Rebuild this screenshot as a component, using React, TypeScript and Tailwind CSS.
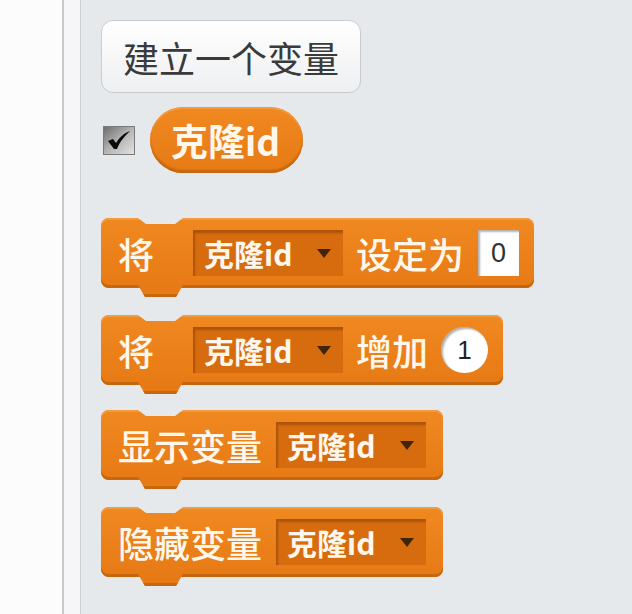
const cjk = { fontFamily: '"Noto Sans CJK SC", "Noto Sans", sans-serif' }
const latin = { fontFamily: '"Liberation Sans", Arial, sans-serif' }

function Block({ width, children }: { width: number; children: React.ReactNode }) {
  return (
    <div
      className="relative flex h-[70px] items-center rounded-[8px] bg-gradient-to-b from-[#f08820] to-[#e77a14] pl-[17px] shadow-[inset_0_-3px_0_#c6660d,inset_0_2px_0_#f39a45]"
      style={{ width }}
    >
      {/* notch on top */}
      <div className="absolute left-[37px] top-0 h-[6px] w-[45px] bg-[#e6e9ec] [clip-path:polygon(0_0,100%_0,calc(100%-8px)_100%,8px_100%)]" />
      {/* tab below */}
      <div className="absolute left-[37px] top-[67px] h-[12px] w-[45px] rounded-b-[4px] bg-[#e77a14] shadow-[inset_0_-3px_0_#c6660d] [clip-path:polygon(0_0,100%_0,calc(100%-7px)_100%,7px_100%)]" />
      {children}
    </div>
  )
}

function Label({ text, className = '' }: { text: string; className?: string }) {
  return (
    <span className={`text-[36px] font-medium leading-none text-[#fff7ec] ${className}`} style={cjk}>
      {text}
    </span>
  )
}

function Dropdown({ className = '' }: { className?: string }) {
  return (
    <div
      className={`flex h-[46px] w-[150px] items-center bg-[#d76c0e] pl-[11px] shadow-[inset_2px_3px_2px_rgba(90,40,0,0.35)] ${className}`}
    >
      <span className="text-[30px] font-semibold leading-none text-[#fff7ec]" style={cjk}>
        克隆id
      </span>
      <svg className="ml-auto mr-[12px]" width="14" height="9" viewBox="0 0 14 9">
        <path d="M0 0 L14 0 L7 9 Z" fill="#3f240a" />
      </svg>
    </div>
  )
}

export default function App() {
  return (
    <div className="flex h-[614px] w-[632px] overflow-hidden bg-[#e6e9ec]">
      <div className="h-full w-[62px] bg-[#fcfcfd]" />
      <div className="h-full w-[2px] bg-[#c9c9ce]" />
      <div className="h-full w-[16px] bg-[#f6f6f8]" />
      <div className="h-full w-[1px] bg-[#cfd0d5]" />

      <div className="flex flex-1 flex-col pl-[20px] pt-[20px]">
        <button
          className="flex h-[73px] w-[260px] items-center justify-center rounded-[12px] border border-[#c9cbce] bg-gradient-to-b from-[#ffffff] to-[#eeeff1] text-[36px] leading-none text-[#3a3a3a]"
          style={cjk}
        >
          建立一个变量
        </button>

        <div className="mt-[14px] flex items-center">
          <div className="ml-[2px] flex h-[29px] w-[32px] items-center justify-center border border-[#7a7a7a] bg-gradient-to-br from-[#6e6e6e] via-[#b5b5b5] to-[#e2e2e2]">
            <svg width="24" height="20" viewBox="0 0 24 20">
              <path d="M1 11 L6 9 L9 13 C12 8 17 3 23 1 C18 6 13 11 10 19 L7 19 Z" fill="#0a0a0a" />
            </svg>
          </div>
          <div className="ml-[15px] flex h-[66px] w-[153px] items-center rounded-full bg-gradient-to-b from-[#f08820] to-[#e77a14] pl-[21px] shadow-[inset_0_-3px_2px_#c6660d,inset_0_2px_1px_#f39a45]">
            <span className="text-[37px] font-bold leading-none text-[#fff7ec]" style={cjk}>
              克隆id
            </span>
          </div>
        </div>

        <div className="mt-[45px]">
          <Block width={433}>
            <Label text="将" />
            <Dropdown className="ml-[39px]" />
            <Label text="设定为" className="ml-[13px]" />
            <div
              className="ml-[14px] flex h-[46px] w-[41px] items-center justify-center bg-white text-[27px] leading-none text-[#333] shadow-[inset_2px_2px_2px_rgba(0,0,0,0.3)]"
              style={latin}
            >
              0
            </div>
          </Block>
        </div>

        <div className="mt-[27px]">
          <Block width={402}>
            <Label text="将" />
            <Dropdown className="ml-[39px]" />
            <Label text="增加" className="ml-[13px]" />
            <div
              className="ml-[13px] flex h-[46px] w-[47px] items-center justify-center rounded-full bg-white text-[26px] leading-none text-[#222] shadow-[inset_2px_2px_2px_rgba(0,0,0,0.3)]"
              style={latin}
            >
              1
            </div>
          </Block>
        </div>

        <div className="mt-[25px]">
          <Block width={342}>
            <Label text="显示变量" />
            <Dropdown className="ml-[14px]" />
          </Block>
        </div>

        <div className="mt-[27px]">
          <Block width={342}>
            <Label text="隐藏变量" />
            <Dropdown className="ml-[14px]" />
          </Block>
        </div>
      </div>
    </div>
  )
}
